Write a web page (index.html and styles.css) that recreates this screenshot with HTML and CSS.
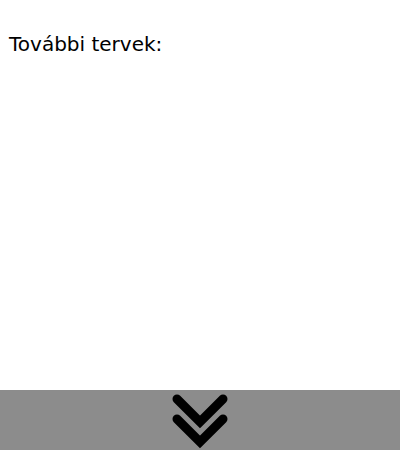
FILE: index.html
```html
<!DOCTYPE html>
<html>
<head>
<meta charset="utf-8">
<link rel="stylesheet" href="styles.css">
</head>
<body>
<div class="page">
  <div class="content">
    <p class="title">További tervek:</p>
  </div>
  <div class="footer">
    <svg class="chevrons" width="56" height="60" viewBox="0 0 56 60">
      <polyline points="5,9 28,32 51,9" fill="none" stroke="#000" stroke-width="9" stroke-linecap="round" stroke-linejoin="miter"/>
      <polyline points="5,29 28,52 51,29" fill="none" stroke="#000" stroke-width="9" stroke-linecap="round" stroke-linejoin="miter"/>
    </svg>
  </div>
</div>
</body>
</html>
```
FILE: styles.css
```css
html, body {
  margin: 0;
  padding: 0;
  background: #fff;
}
.page {
  width: 400px;
  height: 450px;
  display: flex;
  flex-direction: column;
}
.content {
  flex: 1;
  padding: 30px 9px 0;
}
.title {
  margin: 0;
  font-family: "DejaVu Sans", sans-serif;
  font-size: 20px;
  line-height: 28px;
  color: #000;
}
.footer {
  height: 60px;
  background: #8c8c8c;
  display: flex;
  justify-content: center;
}
.chevrons {
  display: block;
}
```
